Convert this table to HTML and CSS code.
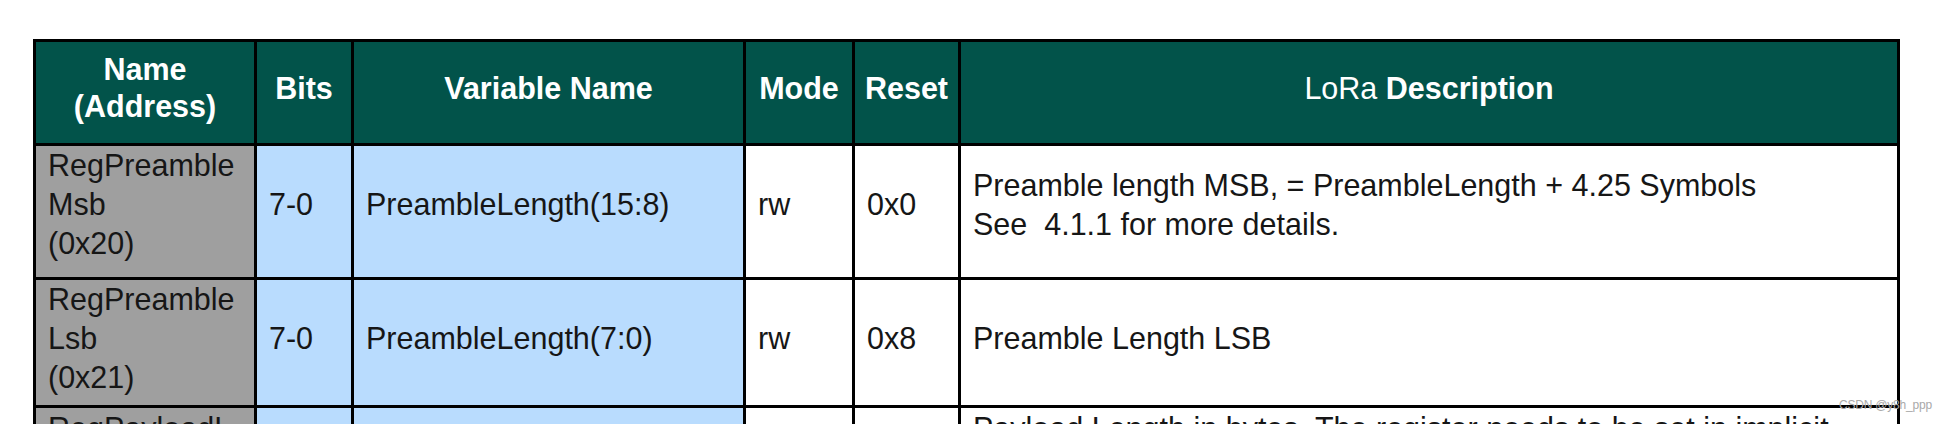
FILE: index.html
```html
<!DOCTYPE html>
<html>
<head>
<meta charset="utf-8">
<link rel="stylesheet" href="styles.css">
</head>
<body>
<div class="page">
  <table class="reg">
    <colgroup>
      <col class="c-name"><col class="c-bits"><col class="c-var"><col class="c-mode"><col class="c-reset"><col class="c-desc">
    </colgroup>
    <thead>
      <tr>
        <th>Name<br>(Address)</th>
        <th>Bits</th>
        <th>Variable Name</th>
        <th>Mode</th>
        <th>Reset</th>
        <th><span class="reg-lora">LoRa</span> Description</th>
      </tr>
    </thead>
    <tbody>
      <tr class="r1">
        <td class="name">RegPreamble<br>Msb<br>(0x20)</td>
        <td class="blue">7-0</td>
        <td class="blue">PreambleLength(15:8)</td>
        <td>rw</td>
        <td>0x0</td>
        <td>Preamble length MSB, = PreambleLength + 4.25 Symbols<br>See&nbsp; 4.1.1 for more details.</td>
      </tr>
      <tr class="r2">
        <td class="name">RegPreamble<br>Lsb<br>(0x21)</td>
        <td class="blue">7-0</td>
        <td class="blue">PreambleLength(7:0)</td>
        <td>rw</td>
        <td>0x8</td>
        <td>Preamble Length LSB</td>
      </tr>
      <tr class="r3">
        <td class="name top">RegPayloadL<br>ength<br>(0x22)</td>
        <td class="blue">7-0</td>
        <td class="blue">PayloadLength(7:0)</td>
        <td>rw</td>
        <td>0x1</td>
        <td class="top">Payload Length in bytes. The register needs to be set in implicit<br>header mode for the expected packet length. A 0 value is not<br>permitted</td>
      </tr>
    </tbody>
  </table>
  <div class="mark">CSDN @y8h_ppp</div>
</div>
</body>
</html>
```
FILE: styles.css
```css
html, body {
  margin: 0;
  padding: 0;
  background: #ffffff;
  overflow: hidden;
}
.page {
  position: relative;
  width: 1951px;
  height: 424px;
  overflow: hidden;
  padding-top: 39px;
  box-sizing: border-box;
}
.reg {
  margin-left: 33px;
  border-collapse: collapse;
  table-layout: fixed;
  width: 1864px;
  font-family: "Liberation Sans", Arial, sans-serif;
  color: #161616;
  border: 3px solid #000;
}
.c-name { width: 221px; }
.c-bits { width: 97px; }
.c-var { width: 392px; }
.c-mode { width: 109px; }
.c-reset { width: 106px; }
.c-desc { width: 939px; }
th, td {
  border: 3px solid #000;
  padding: 0 0 0 12px;
  font-size: 30.5px;
  line-height: 39px;
  text-align: left;
  vertical-align: middle;
  white-space: nowrap;
  overflow: hidden;
}
th {
  background: #02534a;
  color: #ffffff;
  font-weight: bold;
  text-align: center;
  padding: 0 0 9px 0;
  height: 92px;
  line-height: 37px;
}
.reg-lora { font-weight: normal; }
td { padding-bottom: 14px; }
.r1 td { height: 113px; }
.r2 td { height: 116px; padding-bottom: 8px; }
.r3 td { height: 113px; }
.name { background: #9f9f9f; }
.blue { background: #b9dcfe; }
.r3 .top { vertical-align: top; padding-top: 4px; line-height: 33px; }
.mark {
  position: absolute;
  left: 1839px;
  top: 398px;
  font-family: "Liberation Sans", Arial, sans-serif;
  font-size: 12px;
  color: #a9a9a9;
  letter-spacing: -0.2px;
}
```
